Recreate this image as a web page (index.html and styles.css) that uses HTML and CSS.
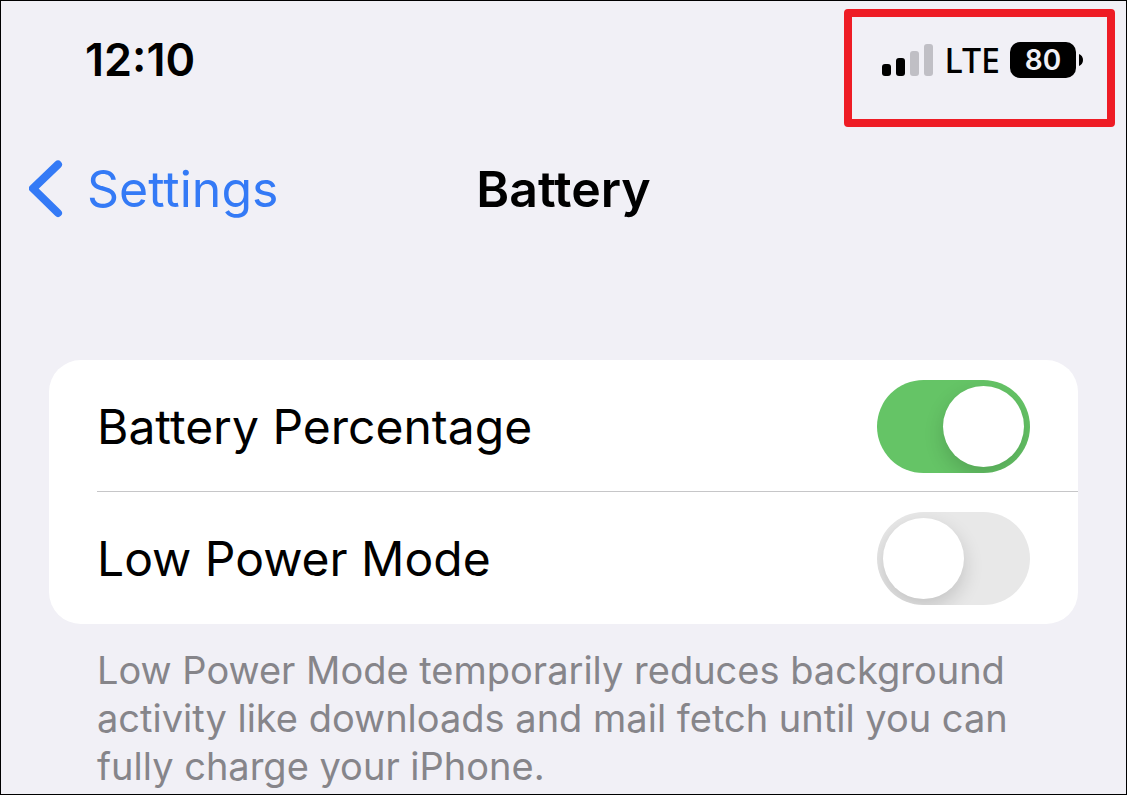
FILE: index.html
```html
<!DOCTYPE html>
<html lang="en">

<head>
    <meta charset="UTF-8">
    <meta name="viewport" content="width=device-width, initial-scale=1.0">
    <title>Battery</title>
    <link rel="stylesheet" href="styles.css">
</head>

<body>

    <!-- Status bar -->
    <header class="status-bar">
        <time class="clock">12:10</time>
        <div class="highlight">
            <svg class="signal" width="52" height="32" viewBox="0 0 52 32" role="img" aria-label="Signal: 2 of 4 bars">
                <rect x="0" y="20" width="9" height="12" rx="3" />
                <rect x="14" y="14" width="9" height="18" rx="3" />
                <rect class="off" x="28" y="7" width="9" height="25" rx="3" />
                <rect class="off" x="42" y="0" width="9" height="32" rx="3" />
            </svg>
            <span class="network">LTE</span>
            <div class="battery">
                <span class="battery-level">80</span>
                <svg width="4" height="12" viewBox="0 0 4 12" aria-hidden="true">
                    <path d="M0 0C2.5 1 4 3.300 4 6S2.500 11 0 12Z" />
                </svg>
            </div>
        </div>
    </header>

    <!-- Navigation -->
    <nav class="nav-bar">
        <a class="back" href="#">
            <svg width="34" height="58" viewBox="0 0 34 58" aria-hidden="true">
                <path d="M29 4.500L4 28.500L29 53" />
            </svg>
            Settings
        </a>
        <h1 class="title">Battery</h1>
    </nav>

    <main class="content">
        <div class="card">
            <div class="row">
                <label for="percentage">Battery Percentage</label>
                <input class="switch" type="checkbox" id="percentage" checked>
            </div>
            <div class="row">
                <label for="lowPower">Low Power Mode</label>
                <input class="switch" type="checkbox" id="lowPower">
            </div>
        </div>
        <p class="note">Low Power Mode temporarily reduces background activity like downloads and mail fetch until you can fully charge your iPhone.</p>
    </main>

</body>

</html>
```

FILE: styles.css
```css
/* Reset */
* {
    margin: 0;
    padding: 0;
    box-sizing: border-box;
}

body {
    min-height: 100vh;
    border: 1px solid #000;
    background-color: #f1f0f6;
    color: #000;
    font-family: Inter, "Liberation Sans", sans-serif;
}

/* Status bar */
.status-bar {
    display: flex;
    justify-content: space-between;
    align-items: flex-start;
    padding: 8px 11px 0 84px;
}

.clock {
    padding-top: 23px;
    font-size: 45px;
    font-weight: 600;
    line-height: 56px;
}

/* Red frame around the indicators */
.highlight {
    display: flex;
    align-items: center;
    gap: 10px;
    height: 118px;
    padding: 0 24px 16px 30px;
    border: 8px solid #ee1c25;
    border-radius: 4px;
}

.signal .off {
    fill: #c0bfc5;
}

.network {
    font-family: "Noto Sans", "Liberation Sans", sans-serif;
    font-size: 34px;
    font-weight: 500;
    line-height: 36px;
}

.battery {
    display: flex;
    align-items: center;
    gap: 3px;
}

.battery-level {
    width: 66px;
    border-radius: 10px;
    background-color: #000;
    color: #f1f0f6;
    font-size: 28px;
    font-weight: 600;
    line-height: 36px;
    text-align: center;
}

/* Navigation */
.nav-bar {
    display: grid;
    grid-template-columns: 1fr auto 1fr;
    align-items: center;
    padding: 32px 28px 0;
    font-size: 50px;
    line-height: 60px;
}

.back {
    display: flex;
    align-items: center;
    gap: 24px;
    color: #347af6;
    text-decoration: none;
}

.back path {
    fill: none;
    stroke: #347af6;
    stroke-width: 8;
    stroke-linecap: round;
    stroke-linejoin: round;
}

.title {
    font-size: 50px;
    font-weight: 600;
}

/* Settings list */
.content {
    padding: 141px 48px 0;
}

.card {
    border-radius: 32px;
    background-color: #fff;
}

.row {
    display: flex;
    justify-content: space-between;
    align-items: center;
    height: 132px;
    margin-left: 48px;
    padding-right: 48px;
    font-size: 48px;
}

.row + .row {
    box-shadow: 0 -1px 0 #c6c6c8;
}

/* Switch */
.switch {
    appearance: none;
    width: 153px;
    height: 93px;
    padding: 6px;
    border-radius: 47px;
    background-color: #e8e8e8;
    overflow: hidden;
    cursor: pointer;
}

.switch::before {
    content: '';
    display: block;
    width: 81px;
    height: 81px;
    border-radius: 50%;
    background-color: #fff;
    box-shadow: 0 8px 20px rgba(0, 0, 0, 0.16);
}

.switch:checked {
    background-color: #65c466;
}

.switch:checked::before {
    margin-left: auto;
}

.note {
    padding: 22px 0 0 48px;
    color: #86858a;
    font-size: 38px;
    line-height: 48px;
}
```
